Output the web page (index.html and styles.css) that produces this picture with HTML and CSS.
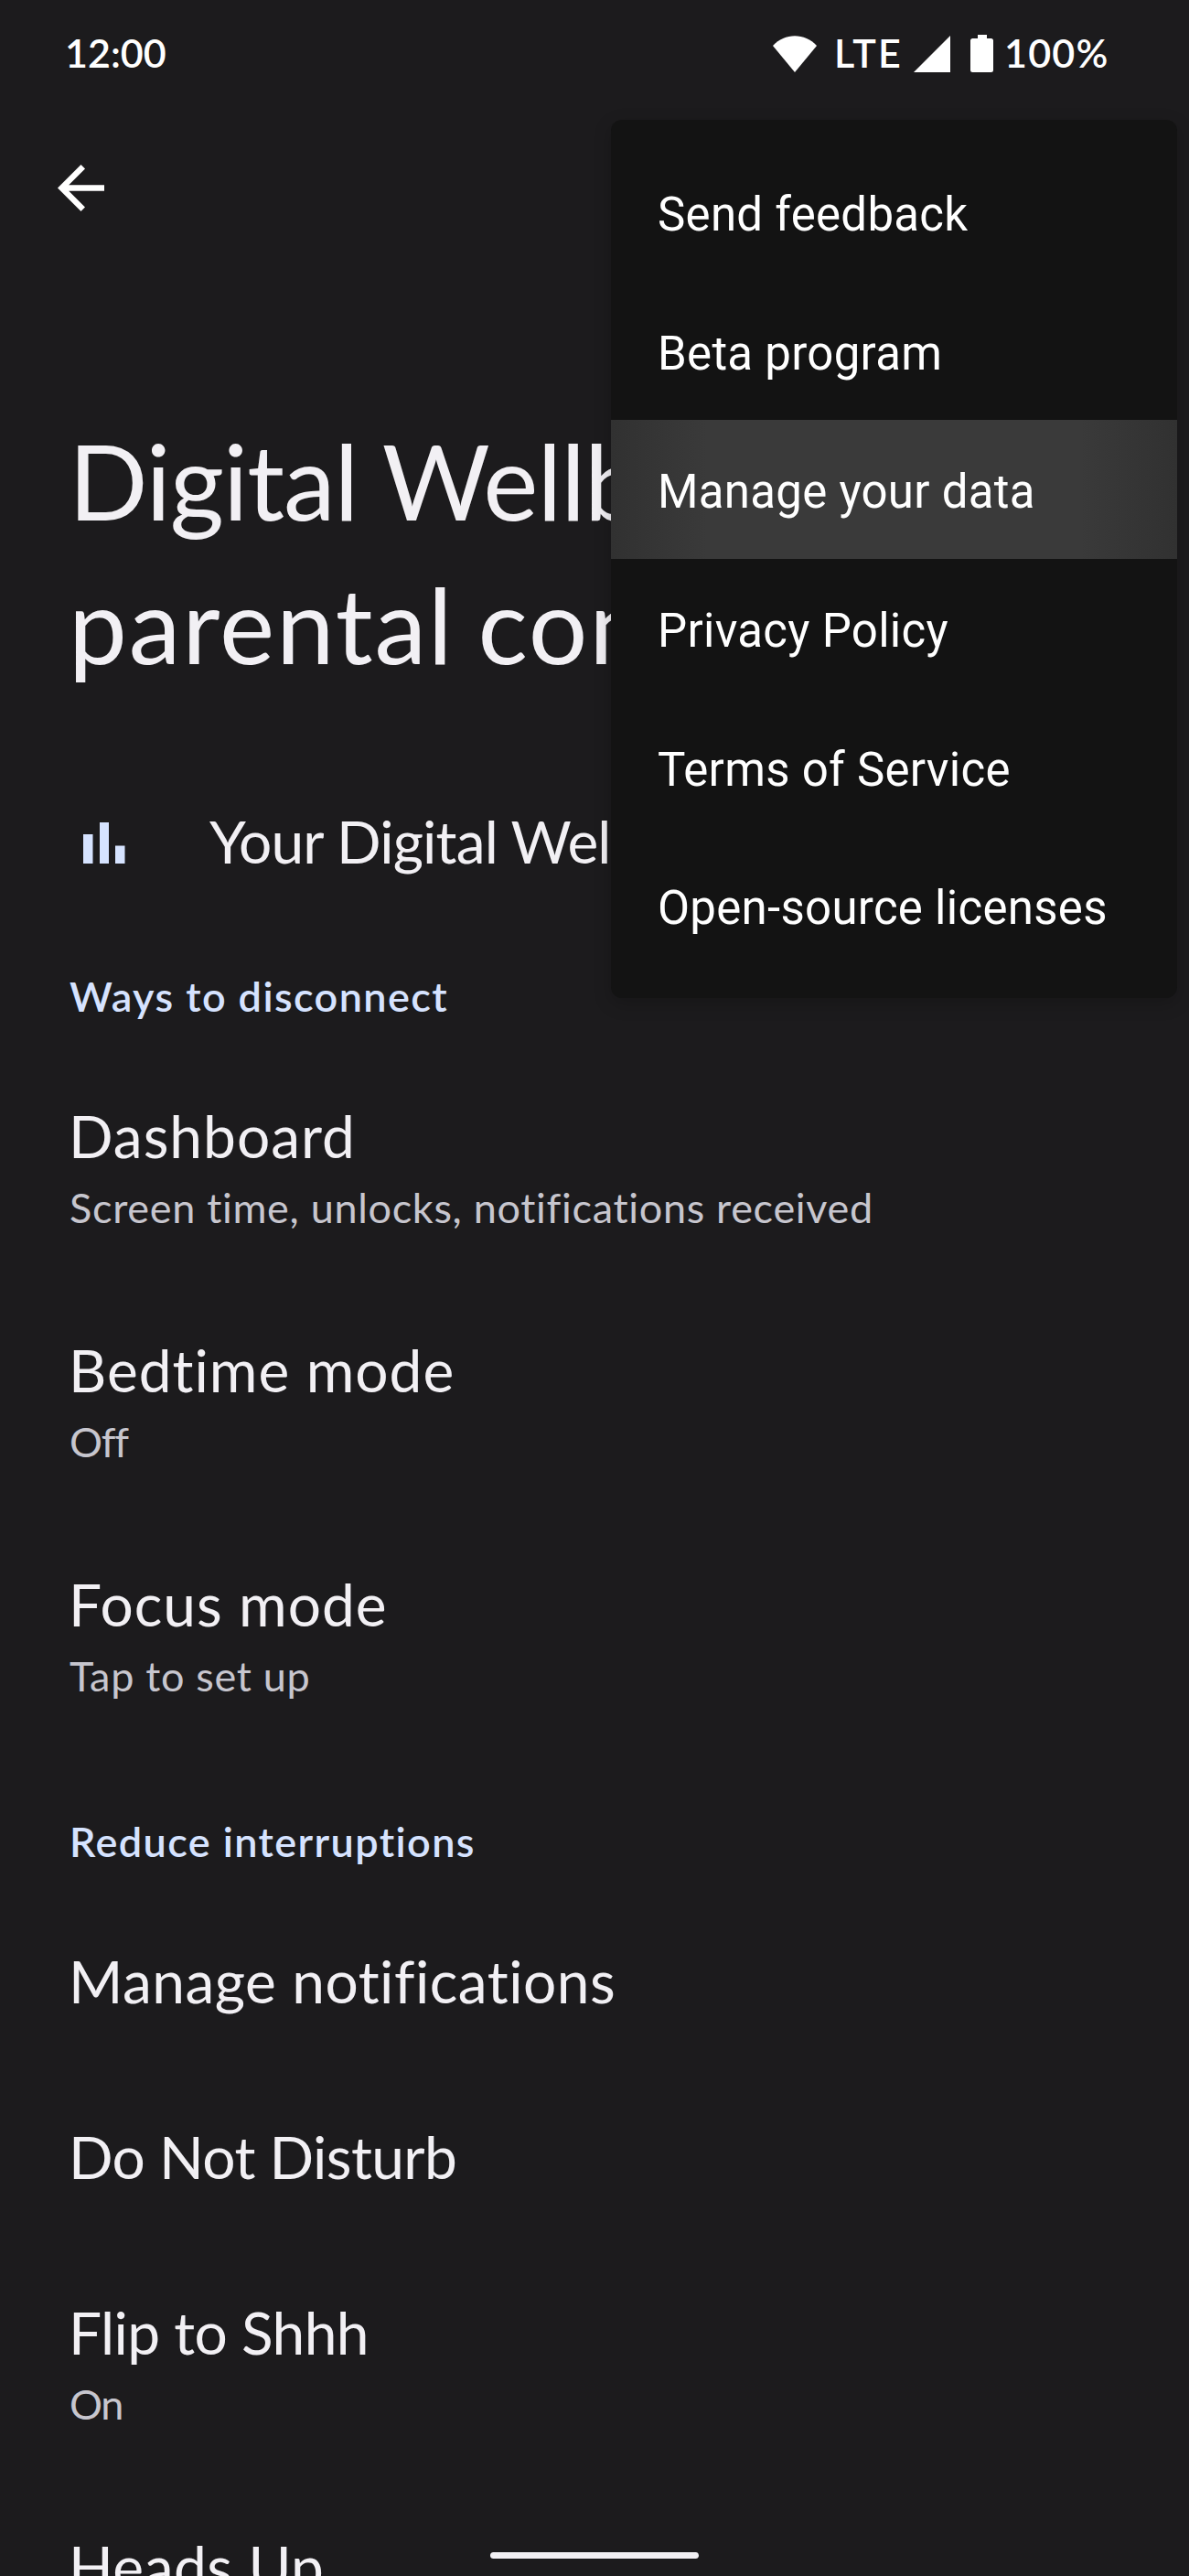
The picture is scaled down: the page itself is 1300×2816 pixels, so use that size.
FILE: index.html
```html
<!DOCTYPE html>
<html lang="en">
<head>
  <meta charset="UTF-8">
  <meta name="viewport" content="width=device-width, initial-scale=1.0">
  <title>Digital Wellbeing</title>
  <link rel="stylesheet" href="styles.css">
</head>
<body>
  <div class="status-bar">
    <span class="clock">12:00</span>
    <div class="status-icons">
      <svg class="wifi" width="48" height="40" viewBox="0 0 48 40"><path d="M0 11C13 -3.5 35 -3.5 48 11L24 40z"/></svg>
      <span class="network">LTE</span>
      <svg class="signal" width="40" height="40" viewBox="0 0 40 40"><path d="M40 0V40H0z"/></svg>
      <svg class="battery" width="25" height="41" viewBox="0 0 25 41"><path d="M8 0H18V4H22.500Q25 4 25 6.500V38.500Q25 41 22.500 41H2.500Q0 41 0 38.500V6.500Q0 4 2.500 4H8z"/></svg>
      <span class="percent">100%</span>
    </div>
  </div>

  <header>
    <button class="back-button" aria-label="Back">
      <svg width="51" height="51" viewBox="4 4 16 16"><path d="M20 11H7.830l5.590-5.590L12 4l-8 8 8 8 1.410-1.410L7.830 13H20v-2z"/></svg>
    </button>
  </header>

  <h1><span class="title-top">Digital Wellbeing &amp;</span><span class="title-bottom">parental controls</span></h1>

  <div class="tools-row">
    <svg width="46" height="52" viewBox="0 0 46 52"><path d="M0 20H10.500V52H0zM18 7H28V52H18zM35 32.500H45.500V52H35z"/></svg>
    <span>Your Digital Wellbeing tools</span>
  </div>

  <h2>Ways to disconnect</h2>
  <div class="item">
    <h3>Dashboard</h3>
    <p>Screen time, unlocks, notifications received</p>
  </div>
  <div class="item">
    <h3>Bedtime mode</h3>
    <p class="tight">Off</p>
  </div>
  <div class="item">
    <h3>Focus mode</h3>
    <p>Tap to set up</p>
  </div>

  <h2>Reduce interruptions</h2>
  <div class="item">
    <h3 class="normal">Manage notifications</h3>
  </div>
  <div class="item">
    <h3 class="tight">Do Not Disturb</h3>
  </div>
  <div class="item">
    <h3 class="tight">Flip to Shhh</h3>
    <p class="tight">On</p>
  </div>
  <div class="item">
    <h3 class="normal">Heads Up</h3>
  </div>

  <!-- Overflow menu -->
  <ul class="menu">
    <li>Send feedback</li>
    <li>Beta program</li>
    <li class="pressed">Manage your data</li>
    <li>Privacy Policy</li>
    <li>Terms of Service</li>
    <li>Open-source licenses</li>
  </ul>

  <div class="nav-handle"></div>
</body>
</html>
```
FILE: styles.css
```css
body {
  background-color: #1c1b1d;
  color: #f2f0f4;
  font-family: Lato, "Open Sans", sans-serif;
  margin: 0;
  height: 2816px;
  overflow: hidden;
  position: relative;
}
h1, h2, h3, p {
  margin: 0;
  font-weight: 400;
  white-space: nowrap;
}
svg {
  display: block;
  flex: none;
  fill: currentColor;
}

/* Status bar */
.status-bar {
  display: flex;
  justify-content: space-between;
  align-items: center;
  height: 115px;
  padding: 0 87px 0 71px;
  color: #fff;
  font-size: 43px;
  font-weight: 600;
}
.status-icons {
  display: flex;
  align-items: center;
}
.network {
  width: 77px;
  margin-left: 19px;
  letter-spacing: 2px;
}
.signal {
  margin: 3px 0 0 10px;
}
.wifi {
  margin-top: 3px;
}
.battery {
  margin: 2px 0 0 22px;
}
.percent {
  width: 115px;
  margin-left: 12px;
  letter-spacing: 1.2px;
}

header {
  display: flex;
  align-items: center;
  height: 181px;
  padding-left: 63px;
}
.back-button {
  background: none;
  border: none;
  padding: 0;
  color: #fff;
}

h1 {
  margin: 150px 0 86px;
  padding-left: 75px;
  font-size: 114px;
  line-height: 157.3px;
}
h1 span {
  display: block;
}
.title-top {
  letter-spacing: -1.1px;
}
.title-bottom {
  letter-spacing: 1.8px;
  word-spacing: -5px;
}

.tools-row {
  display: flex;
  align-items: center;
  gap: 92px;
  height: 142px;
  padding-left: 91px;
  font-size: 64px;
  letter-spacing: -0.85px;
  white-space: nowrap;
}
.tools-row span {
  padding-top: 3px;
}
.tools-row svg {
  color: #d6e3ff;
}

h2 {
  padding: 73px 76px 29px;
  color: #d6e3ff;
  font-size: 45px;
  font-weight: 600;
  line-height: 54px;
  letter-spacing: 1.4px;
}

.item {
  padding: 57px 75px 55px;
}
.item h3 {
  font-size: 64px;
  line-height: 80px;
  letter-spacing: 1px;
}
.item p {
  margin-top: 13px;
  padding-left: 1px;
  color: #c7c6ce;
  font-size: 45px;
  line-height: 51px;
  letter-spacing: 0.68px;
}
.item .normal {
  letter-spacing: 0.5px;
}
.item .tight {
  letter-spacing: -0.6px;
}
.item p.tight {
  letter-spacing: -1.2px;
}

/* Menu opened over the page */
.menu {
  position: absolute;
  top: 131px;
  right: 13px;
  width: 619px;
  margin: 0;
  padding: 25px 0;
  box-sizing: border-box;
  list-style: none;
  background-color: #131313;
  border-radius: 12px;
  box-shadow: 0 6px 20px rgba(0, 0, 0, 0.2);
  color: #fff;
  font-family: Roboto, sans-serif;
  font-size: 51px;
  letter-spacing: 0.28px;
}
.menu li {
  height: 151.67px;
  padding: 3px 0 0 51px;
  box-sizing: border-box;
  line-height: 151.67px;
}
.menu .pressed {
  background: linear-gradient(to right, #313131, #3a3a3a 17%, #3a3a3a 83%, #313131);
}

.nav-handle {
  position: absolute;
  left: 536px;
  bottom: 19px;
  width: 228px;
  height: 7px;
  border-radius: 4px;
  background-color: #f2f0f4;
}
```
